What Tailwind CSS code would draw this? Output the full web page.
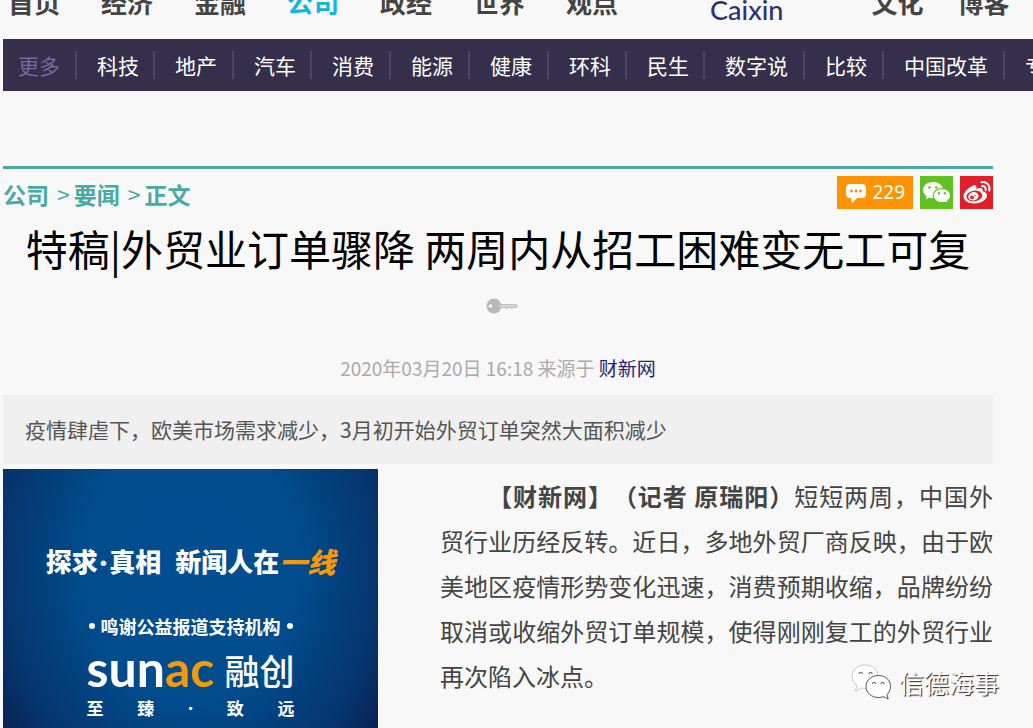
<!DOCTYPE html>
<html lang="zh-CN">
<head>
    <meta charset="UTF-8">
    <meta name="viewport" content="width=device-width, initial-scale=1.0">
    <title>特稿|外贸业订单骤降 两周内从招工困难变无工可复</title>
    <script src="https://cdn.jsdelivr.net/npm/@tailwindcss/browser@4"></script>
</head>
<body class="bg-[#f8f8f8] font-['Noto_Sans_CJK_SC',sans-serif] text-[#444] overflow-x-hidden">

    <div class="relative h-screen overflow-hidden">
        <!-- Top navigation -->
        <header class="-mt-4 mb-[11px] flex items-start whitespace-nowrap pl-2 text-[26px] leading-[36px] font-bold text-[#444]">
            <nav class="flex shrink-0 gap-[41px]">
                <a href="#">首页</a>
                <a href="#">经济</a>
                <a href="#">金融</a>
                <a href="#" class="text-[#0fb5e0]">公司</a>
                <a href="#">政经</a>
                <a href="#">世界</a>
                <a href="#">观点</a>
            </nav>
            <a href="#" class="ml-[92px] mt-2 shrink-0 font-['Lato',sans-serif] text-[27px] font-medium text-[#2d3277]">Caixin</a>
            <nav class="ml-[88px] flex shrink-0 gap-[34px]">
                <a href="#">文化</a>
                <a href="#">博客</a>
            </nav>
        </header>

        <!-- Channel bar -->
        <nav class="ml-[3px] overflow-hidden bg-[#352f4b] py-3">
            <ul class="flex whitespace-nowrap text-[21px] leading-[28px] text-white">
                <li class="shrink-0 border-r-2 border-[#4a4468] pl-[15px] pr-[15px]"><a href="#" class="text-[#736ba0]">更多</a></li>
                <li class="shrink-0 border-r-2 border-[#4a4468] pl-5 pr-[14px]"><a href="#">科技</a></li>
                <li class="shrink-0 border-r-2 border-[#4a4468] pl-5 pr-[15px]"><a href="#">地产</a></li>
                <li class="shrink-0 border-r-2 border-[#4a4468] pl-5 pr-[14px]"><a href="#">汽车</a></li>
                <li class="shrink-0 border-r-2 border-[#4a4468] pl-5 pr-[15px]"><a href="#">消费</a></li>
                <li class="shrink-0 border-r-2 border-[#4a4468] pl-5 pr-[15px]"><a href="#">能源</a></li>
                <li class="shrink-0 border-r-2 border-[#4a4468] pl-5 pr-[15px]"><a href="#">健康</a></li>
                <li class="shrink-0 border-r-2 border-[#4a4468] pl-5 pr-[14px]"><a href="#">环科</a></li>
                <li class="shrink-0 border-r-2 border-[#4a4468] pl-5 pr-[14px]"><a href="#">民生</a></li>
                <li class="shrink-0 border-r-2 border-[#4a4468] pl-5 pr-[15px]"><a href="#">数字说</a></li>
                <li class="shrink-0 border-r-2 border-[#4a4468] pl-5 pr-[15px]"><a href="#">比较</a></li>
                <li class="shrink-0 border-r-2 border-[#4a4468] pl-5 pr-[15px]"><a href="#">中国改革</a></li>
                <li class="shrink-0 pl-5"><a href="#">专栏</a></li>
            </ul>
        </nav>

        <main class="ml-[3px] mr-10 mt-[75px] border-t-3 border-[#4aa9a3]">
            <!-- Breadcrumb and share buttons -->
            <div class="flex justify-between pt-[7px]">
                <div class="flex items-center pt-0.5 text-[23px] leading-[32px] font-bold text-[#4aa9a3]">
                    <a href="#">公司</a>
                    <span class="ml-2 mr-1 font-normal">&gt;</span>
                    <a href="#">要闻</a>
                    <span class="ml-2 mr-1 font-normal">&gt;</span>
                    <span>正文</span>
                </div>
                <div class="flex gap-[7px]">
                    <button class="flex h-[33px] items-center gap-[5px] bg-[#ff9400] px-2 font-['Noto_Sans',sans-serif] text-[19px] text-white" aria-label="评论">
                        <svg class="h-[22px] w-[22px]" viewBox="0 0 22 22">
                            <path fill="#fff" d="M5 2h12q4 0 4 4v6q0 4-4 4h-5l-5 5-1-5H5q-4 0-4-4V6q0-4 4-4z"/>
                            <g fill="#ff9400"><circle cx="6.500" cy="9" r="1.500"/><circle cx="11" cy="9" r="1.500"/><circle cx="15.500" cy="9" r="1.500"/></g>
                        </svg>
                        229
                    </button>
                    <button class="h-[33px] w-[33px] bg-[#5fc122]" aria-label="微信">
                        <svg viewBox="0 0 33 33">
                            <path fill="#fff" d="M13 6C7.300 6 3 9.600 3 14c0 2.600 1.400 4.700 3.600 6.200L5.700 23.500l3.500-1.900c1.300.4 2.500.5 3.800.5C18.700 22 23 18.500 23 14S18.700 6 13 6z"/>
                            <path fill="#fff" stroke="#5fc122" stroke-width="1.200" d="M22 12.500c-5 0-8.800 3.100-8.800 7.100s3.800 7.100 8.800 7.100c1.100 0 2.200-.2 3.200-.5l3.200 1.900-.8-3c1.900-1.300 3.100-3.300 3.100-5.500 0-4-3.900-7.100-8.700-7.100z"/>
                            <g fill="#5fc122"><circle cx="9.500" cy="11.500" r="1.300"/><circle cx="16.300" cy="11.500" r="1.300"/><circle cx="19" cy="17.300" r="1.200"/><circle cx="24.800" cy="17.300" r="1.200"/></g>
                        </svg>
                    </button>
                    <button class="h-[33px] w-[33px] bg-[#e01f2b]" aria-label="微博">
                        <svg viewBox="0 0 33 33">
                            <path fill="#fff" d="M13.500 9.500c2-.6 3.500.5 2.900 3.400 3.600-1.400 7-1.200 6.300 2.400 2.700.8 4.300 2.100 4.300 4.200 0 4.100-5.700 7.900-12.400 7.900C8.300 27.400 3.500 24.600 3.500 20.400c0-4 5.500-9.700 10-10.900z"/>
                            <ellipse cx="14.300" cy="20" rx="8" ry="5.400" fill="#e01f2b" transform="rotate(-7 14.300 20)"/>
                            <ellipse cx="13.400" cy="20.300" rx="5.200" ry="4.200" fill="#fff" transform="rotate(-15 13.400 20.300)"/>
                            <circle cx="12" cy="21.300" r="1.900" fill="#e01f2b"/>
                            <circle cx="15" cy="19.500" r=".8" fill="#e01f2b"/>
                            <path fill="none" stroke="#fff" stroke-width="2" stroke-linecap="round" d="M21.500 6.200c5-1 9.200 3.300 7.800 8.500M22 10.200c2.500-.5 4.300 1.500 3.600 4"/>
                        </svg>
                    </button>
                </div>
            </div>

            <!-- Headline -->
            <h1 class="mt-2 text-center text-[42px] leading-[60px] text-black">特稿|外贸业订单骤降 两周内从招工困难变无工可复</h1>
            <svg class="mx-auto mt-[19px] h-[18px] w-10" viewBox="-8 0 40 18">
                <path fill="#c4c4c4" d="M13 7h17l2 2-2 2h-3l-1 1.500-1.500-1.500H22l-1.500 1.500L19 11h-6z"/>
                <circle cx="8" cy="9" r="7.500" fill="#b8b8b8"/>
                <circle cx="4.500" cy="9" r="1.800" fill="#f8f8f8"/>
                <path stroke="#e4e4e4" d="M13 9h17"/>
            </svg>
            <p class="mt-10 text-center text-[19px] leading-[26px] text-[#aaa]">2020年03月20日 16:18 来源于 <a href="#" class="text-[#1d2478]">财新网</a></p>
            <p class="mt-3.5 bg-[#f0f0f0] px-[22px] py-[18px] text-[21px] leading-[33px] text-[#555]">疫情肆虐下，欧美市场需求减少，3月初开始外贸订单突然大面积减少</p>

            <div class="mt-[5px] flex">
                <!-- Sponsor card -->
                <aside class="flex h-[300px] w-[375px] shrink-0 flex-col items-center bg-[radial-gradient(ellipse_240px_300px_at_50%_32%,#004f92_0%,#004c8c_45%,#06346d_80%,#0b1c4c_100%)] pt-[74px] text-white">
                    <p class="flex items-center text-[26px] leading-[36px] font-black">探求<span class="mx-0.5 font-['Lato',sans-serif]">·</span>真相<span class="ml-3.5">新闻人在</span><span class="text-[28px] italic text-[#f39a0b]">一线</span></p>
                    <p class="mt-[34px] flex items-center gap-1.5 text-[18px] leading-[26px] font-bold">
                        <span class="h-1.5 w-1.5 rounded-full bg-white"></span>鸣谢公益报道支持机构<span class="h-1.5 w-1.5 rounded-full bg-white"></span>
                    </p>
                    <div class="flex w-[208px] items-center justify-between whitespace-nowrap leading-[58px]">
                        <span class="pb-1 font-['Lato',sans-serif] text-[50px] font-bold">sun<span class="text-[#f39a0b]">ac</span></span>
                        <span class="text-[35px] font-medium">融创</span>
                    </div>
                    <p class="-mt-1 flex w-[208px] justify-between text-[17px] leading-[22px] font-bold"><span>至</span><span>臻</span><span class="font-['Lato',sans-serif]">·</span><span>致</span><span>远</span></p>
                </aside>
                <!-- Article body -->
                <article class="ml-[62px] flex-1 pt-1">
                    <p class="indent-[48px] text-justify text-[24px] leading-[45px] [text-spacing-trim:space-all]"><b>【财新网】（记者 原瑞阳）</b>短短两周，中国外贸行业历经反转。近日，多地外贸厂商反映，由于欧美地区疫情形势变化迅速，消费预期收缩，品牌纷纷取消或收缩外贸订单规模，使得刚刚复工的外贸行业再次陷入冰点。</p>
                </article>
            </div>
        </main>

        <!-- Account mark over the article -->
        <div class="absolute bottom-7 right-[34px] flex items-center gap-2">
            <svg class="h-[36px] w-[40px]" viewBox="0 0 40 36">
                <path fill="#fff" stroke="#bbb" stroke-width=".8" d="M14 1C6.500 1 1 6 1 12.500c0 3.700 1.900 6.900 5 9L4.500 27l5.700-3.100c1.200.3 2.500.5 3.800.5 7.500 0 13-5.200 13-11.900S21.500 1 14 1z"/>
                <path fill="#fff" stroke="#555" stroke-width="1" d="M27.500 11.500C20.500 11.500 15 16.200 15 22.500s5.500 11 12.500 11c1.900 0 3.500-.3 5-.9l4.700 2.400-1.200-4.400c2.100-2 3.500-4.800 3.500-8.100 0-6.300-5-11-12-11z"/>
                <g fill="none" stroke="#777" stroke-width="1.200"><path d="M8 10a1.600 1.600 0 0 1 3.200 0M18 10a1.600 1.600 0 0 1 3.200 0M21.500 20a1.600 1.600 0 0 1 3.200 0M30 20a1.600 1.600 0 0 1 3.200 0"/></g>
            </svg>
            <span class="text-[25px] leading-[36px] text-white [text-shadow:1px_1px_1px_#222]">信德海事</span>
        </div>
    </div>

</body>
</html>
